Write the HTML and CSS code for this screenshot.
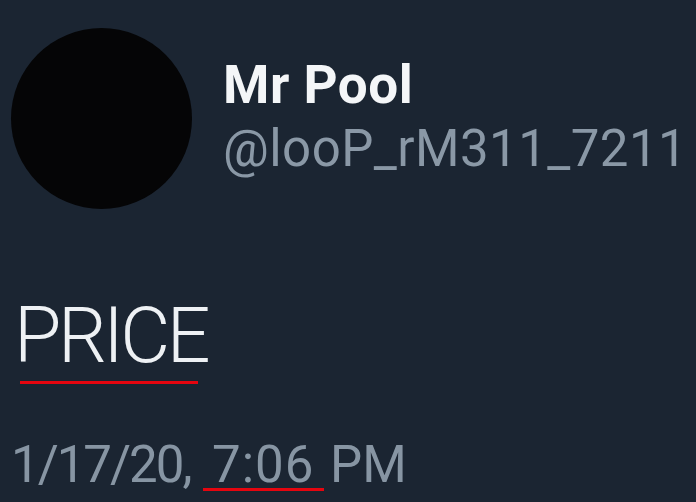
FILE: index.html
```html
<!DOCTYPE html>
<html lang="en">
<head>
<meta charset="utf-8">
<title>Mr Pool</title>
<link rel="stylesheet" href="styles.css">
</head>
<body>
<main class="tweet">
  <header class="author">
    <div class="avatar"></div>
    <div class="names">
      <div class="name">Mr Pool</div>
      <div class="handle">@looP_rM311_7211</div>
    </div>
  </header>
  <p class="text">PRICE</p>
  <div class="mark mark-text"></div>
  <p class="date"><span class="day">1/17/20,</span> <span class="time">7:06</span> PM</p>
</main>
</body>
</html>
```
FILE: styles.css
```css
html, body {
  margin: 0;
  padding: 0;
  background: #1b2532;
  width: 696px;
  height: 502px;
  overflow: hidden;
}

.tweet {
  font-family: Roboto, "Liberation Sans", sans-serif;
  padding: 28px 0 0 9px;
}

.author {
  display: flex;
  align-items: flex-start;
}

.avatar {
  width: 181px;
  height: 181px;
  border-radius: 50%;
  background: #050506;
  margin-left: 2px;
  flex: none;
}

.names {
  margin-top: 25px;
  margin-left: 31px;
}

.name {
  font-size: 53px;
  line-height: 64px;
  font-weight: 700;
  letter-spacing: 0.5px;
  color: #f4f6f8;
}

.handle {
  font-size: 51px;
  line-height: 64px;
  letter-spacing: 0.45px;
  color: #8a98a6;
}

.text {
  margin: 82px 0 0 5px;
  font-size: 77px;
  line-height: 90px;
  font-weight: 300;
  letter-spacing: -3.5px;
  color: #eef1f4;
}

.mark {
  height: 3px;
  background: #e5050f;
}

.mark-text {
  width: 178px;
  margin-left: 11px;
}

.date {
  margin: 51px 0 0 2px;
  font-size: 51px;
  line-height: 60px;
  word-spacing: 3px;
  color: #8795a3;
}

.day {
  letter-spacing: -2px;
  margin-right: 6px;
}

.time {
  position: relative;
  letter-spacing: 1px;
}

.time::after {
  content: "";
  position: absolute;
  left: -9px;
  right: -10px;
  top: 53px;
  height: 3px;
  background: #e5050f;
}
```
